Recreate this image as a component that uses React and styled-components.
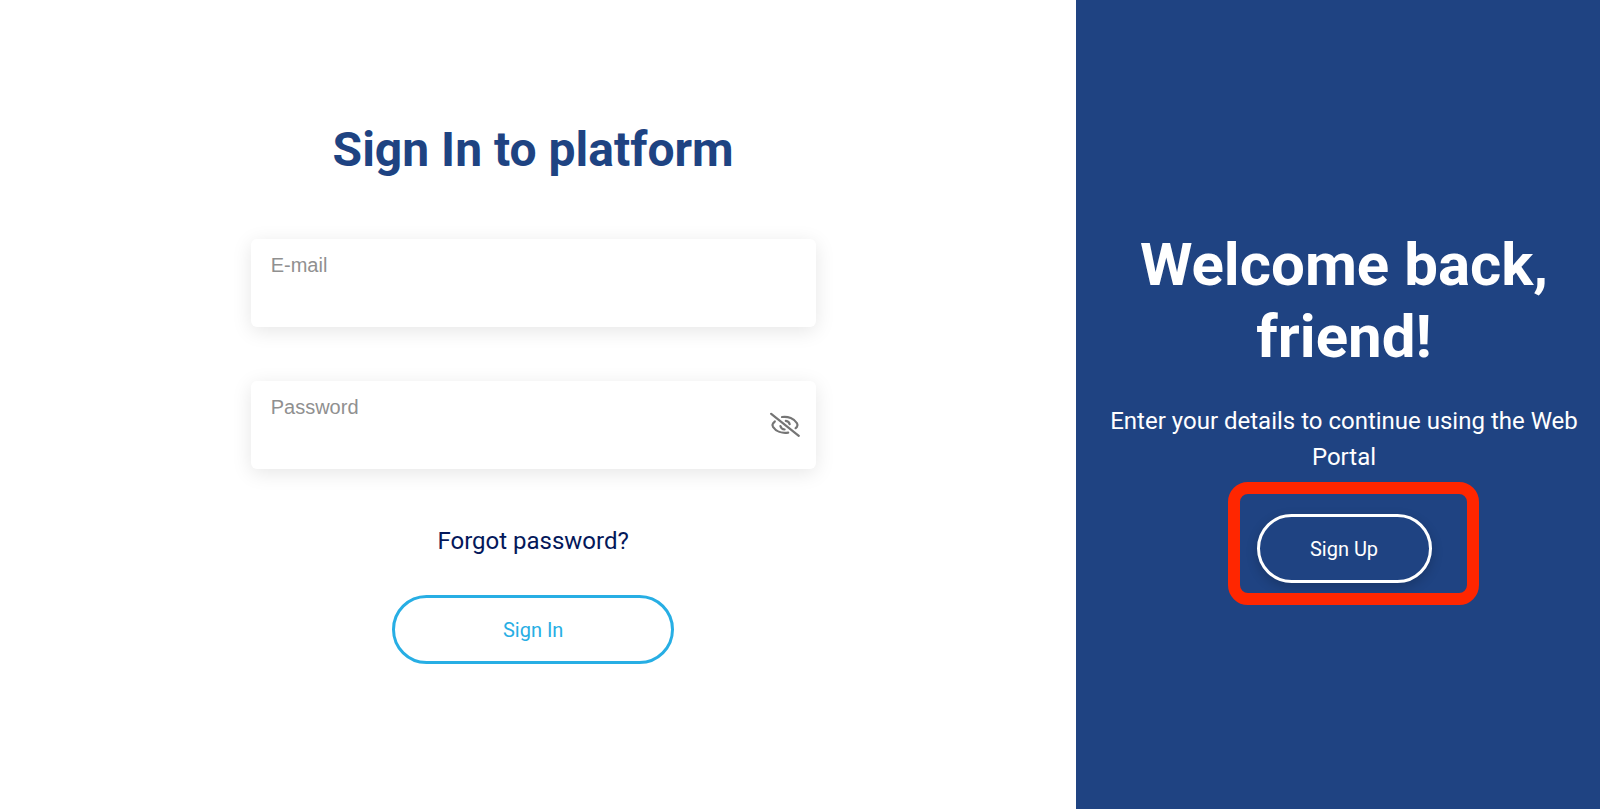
import { useState } from "react";
import styled, { createGlobalStyle } from "styled-components";

const EyeOff = () => (
  <svg width="30" height="26" viewBox="0 0 30 26" fill="none" stroke="currentColor" strokeWidth="2.2" strokeLinecap="round" aria-hidden="true">
    <path d="M1.2 1.8L28.8 23.8" />
    <path d="M12 5C18 4 24.3 6.6 27 11.2C27.7 12.4 27.7 13.6 27 14.7L25.6 16.2" />
    <path d="M4.8 9.4L3 11.4C2.3 12.4 2.3 13.6 3 14.8C6 19.3 12 21.7 18.2 20.6" />
    <path d="M15.8 8.8C17.8 9.1 19.2 10.3 19.7 12.2" />
    <path d="M10.4 14C10.9 16 12.4 17.3 14.6 17.5" />
  </svg>
);

const App = () => {
  const [email, setEmail] = useState("");
  const [password, setPassword] = useState("");
  const [visible, setVisible] = useState(false);

  return (
    <>
      <GlobalStyle />
      <Page>
        <SignIn onSubmit={(e) => e.preventDefault()}>
          <Title>Sign In to platform</Title>
          <Fields>
            <Field>
              <Label htmlFor="email">E-mail</Label>
              <Input id="email" type="email" value={email} onChange={(e) => setEmail(e.target.value)} />
            </Field>
            <Field>
              <Label htmlFor="password">Password</Label>
              <Input
                id="password"
                type={visible ? "text" : "password"}
                value={password}
                onChange={(e) => setPassword(e.target.value)}
              />
              <Toggle type="button" aria-label="Show password" onClick={() => setVisible(!visible)}>
                <EyeOff />
              </Toggle>
            </Field>
          </Fields>
          <Forgot href="#forgot">Forgot password?</Forgot>
          <Button type="submit" $width="50%" $color="#27aee4">Sign In</Button>
        </SignIn>
        <Welcome>
          <Heading>Welcome back, friend!</Heading>
          <Text>Enter your details to continue using the Web Portal</Text>
          <Action>
            <Button type="button" $width="175px" $color="#fff" $shadow>Sign Up</Button>
            <Highlight />
          </Action>
        </Welcome>
      </Page>
    </>
  );
};

const GlobalStyle = createGlobalStyle`
  * {
    box-sizing: border-box;
  }

  body {
    margin: 0;
    background: #fff;
    font-family: Roboto, sans-serif;
  }
`;

const Page = styled.main`
  display: grid;
  grid-template-columns: 1076fr 524fr;
  min-height: 100vh;
`;

const SignIn = styled.form`
  display: flex;
  flex-direction: column;
  align-items: center;
  width: 52.5%;
  margin-left: 23.3%;
  padding: 121px 0 40px;
`;

const Title = styled.h1`
  margin: 0 0 60px;
  color: #1e4382;
  font-size: 48px;
  font-weight: 700;
  line-height: 58px;
  white-space: nowrap;
`;

const Fields = styled.div`
  display: flex;
  flex-direction: column;
  gap: 54px;
  width: 100%;
`;

const Field = styled.div`
  display: grid;
  grid-template-columns: 1fr auto;
  grid-template-rows: 24px 36px;
  padding: 14px 16px 14px 20px;
  border-radius: 6px;
  background: #fff;
  box-shadow: 0 4px 20px rgba(0, 0, 0, 0.1);
`;

const Label = styled.label`
  color: #909090;
  font-family: "Liberation Sans", Arial, sans-serif;
  font-size: 20px;
  line-height: 24px;
`;

const Input = styled.input`
  grid-row: 2;
  min-width: 0;
  padding: 0;
  border: none;
  outline: none;
  background: transparent;
  color: #333;
  font-size: 20px;
`;

const Toggle = styled.button`
  display: flex;
  grid-row: 1 / 3;
  grid-column: 2;
  align-self: center;
  padding: 0;
  border: none;
  background: none;
  color: #757575;
  cursor: pointer;
`;

const Forgot = styled.a`
  margin: 54px 0 36px;
  color: #04185a;
  font-size: 24px;
  line-height: 36px;
  text-decoration: none;
`;

const Button = styled.button`
  width: ${({ $width }) => $width};
  height: 69px;
  border: 3px solid ${({ $color }) => $color};
  border-radius: 35px;
  background: transparent;
  box-shadow: ${({ $shadow }) => ($shadow ? "0 4px 12px rgba(0, 0, 0, 0.2)" : "none")};
  color: ${({ $color }) => $color};
  font-family: inherit;
  font-size: 20px;
  cursor: pointer;
`;

const Welcome = styled.section`
  display: flex;
  flex-direction: column;
  align-items: center;
  justify-content: center;
  padding: 3px 0 0 12px;
  background: #1f4382;
  color: #fff;
  text-align: center;
`;

const Heading = styled.h2`
  margin: 0 0 30px;
  font-size: 60px;
  font-weight: 700;
  line-height: 72px;
`;

const Text = styled.p`
  margin: 0 0 39px;
  font-size: 24px;
  line-height: 36px;
`;

const Action = styled.div`
  position: relative;
`;

/* red frame drawn over the sign up button */
const Highlight = styled.div`
  position: absolute;
  top: -32px;
  right: -47px;
  bottom: -22px;
  left: -29px;
  border: 12px solid #ff2600;
  border-radius: 20px;
  pointer-events: none;
`;

export default App;
